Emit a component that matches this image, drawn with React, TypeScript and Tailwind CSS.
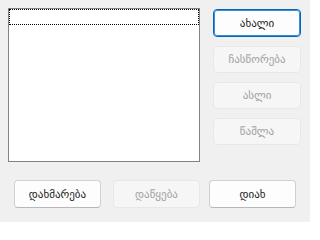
import React from "react";

const font = { fontFamily: '"DejaVu Sans", "Noto Sans", sans-serif' };

function Btn({
  label,
  disabled,
  focused,
  className = "",
}: {
  label: string;
  disabled?: boolean;
  focused?: boolean;
  className?: string;
}) {
  const base =
    "flex items-center justify-center rounded-[4px] text-[11px] leading-none";
  const style = focused
    ? "border border-[#0067c0] outline outline-1 outline-[#3d8bd0] -outline-offset-2 bg-[#fdfdfd] text-[#1a1a1a]"
    : disabled
    ? "border border-[#e8e8e8] bg-[#f6f6f6] text-[#a0a0a0]"
    : "border border-[#d0d0d0] border-b-[#b8b8b8] bg-[#fdfdfd] text-[#1a1a1a]";
  return <div className={`${base} ${style} ${className}`}>{label}</div>;
}

export default function App() {
  return (
    <div
      className="w-[310px] h-[222px] bg-[#f0f0f0] flex flex-col"
      style={font}
    >
      <div className="flex pt-[8px] pl-[8px]">
        <div className="w-[192px] h-[154px] border border-[#82828a] bg-white">
          <div className="h-[16px] border border-dotted border-black" />
        </div>
        <div className="ml-[13px] mt-[1px] flex flex-col gap-[9px] w-[88px]">
          <Btn label="ახალი" focused className="h-[28px]" />
          <Btn label="ჩასწორება" disabled className="h-[27px]" />
          <Btn label="ასლი" disabled className="h-[27px]" />
          <Btn label="წაშლა" disabled className="h-[27px]" />
        </div>
      </div>
      <div className="flex pl-[14px] mt-[18px]">
        <Btn label="დახმარება" className="w-[87px] h-[28px]" />
        <Btn label="დაწყება" disabled className="w-[87px] h-[28px] ml-[12px]" />
        <Btn label="დიახ" className="w-[87px] h-[28px] ml-[9px]" />
      </div>
    </div>
  );
}
